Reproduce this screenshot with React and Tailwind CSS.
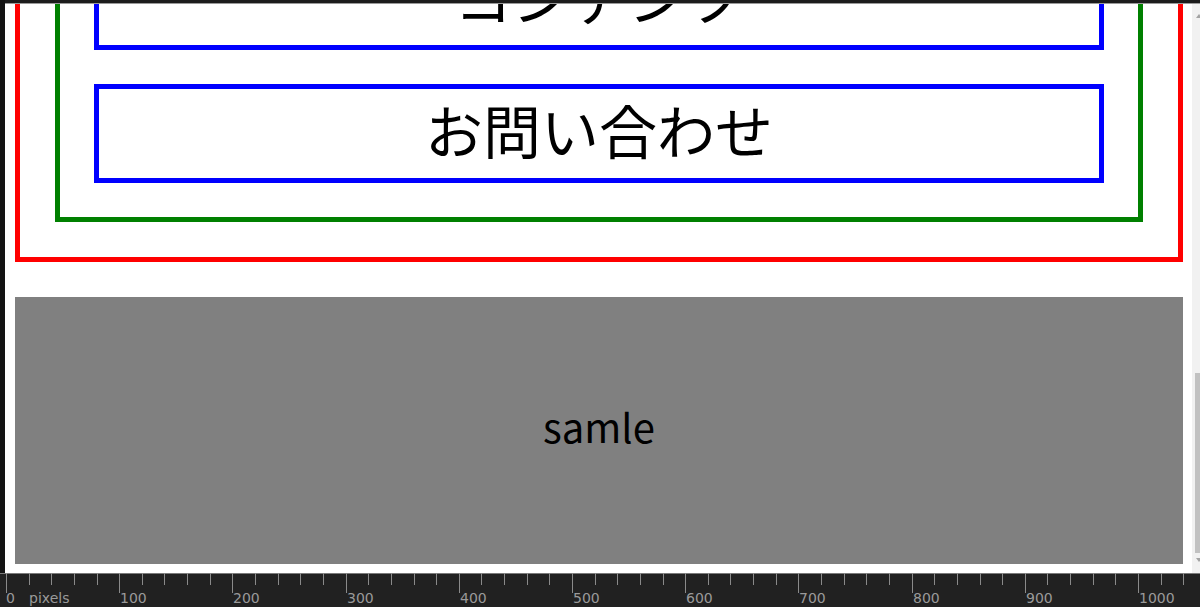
import React from 'react'

const NAV_ITEMS = ['コンテンツ', 'お問い合わせ']

// ruler: 100 units = 113.2px, origin at x=6
const unitX = (u) => 6 + u * 1.132

const Ruler = () => {
  const ticks = []
  for (let u = 0; u <= 1060; u += 20) ticks.push(u)
  const labels = []
  for (let u = 100; u <= 1000; u += 100) labels.push(u)

  return (
    <svg width="1200" height="34" className="block">
      <rect width="1200" height="34" fill="#212121" />
      <line x1="0" y1="0.5" x2="1200" y2="0.5" stroke="#7a7a7a" />
      {ticks.map((u) => {
        const x = Math.round(unitX(u)) + 0.5
        const major = u % 100 === 0
        return (
          <line key={u} x1={x} y1="0" x2={x} y2={major ? 20 : 12} stroke="#8a8a8a" strokeWidth="1" />
        )
      })}
      <text x="6" y="30" fill="#9a9a9a" fontSize="14" fontFamily="'DejaVu Sans', sans-serif">0</text>
      <text x="29" y="30" fill="#9a9a9a" fontSize="14" fontFamily="'DejaVu Sans', sans-serif">pixels</text>
      {labels.map((u) => (
        <text key={u} x={Math.round(unitX(u)) + 1} y="30" fill="#9a9a9a" fontSize="14" fontFamily="'DejaVu Sans', sans-serif">
          {u}
        </text>
      ))}
    </svg>
  )
}

const Scrollbar = () => (
  <div className="relative w-[8px] h-full bg-[#f1f1f1]">
    <svg width="8" height="6" className="absolute left-[3px] top-[9px]">
      <path d="M4 1 L7 5 L1 5 Z" fill="#a3a3a3" />
    </svg>
    <div className="absolute left-[3px] right-0 top-[369px] h-[180px] bg-[#c1c1c1]" />
    <svg width="8" height="6" className="absolute left-[3px] top-[553px]">
      <path d="M1 1 L7 1 L4 5 Z" fill="#a3a3a3" />
    </svg>
  </div>
)

// page is scrolled down, so the top of the nav sits above the viewport
const Page = () => (
  <div className="mt-[-142px] pt-[10px] pl-[10px] pr-[9px] pb-[10px] font-['Noto_Sans_CJK_JP',sans-serif] text-black">
    <div className="border-[5px] border-[#ff0000] p-[35px]">
      <nav className="border-[5px] border-[#008000] p-[34px] flex flex-col gap-[34px]">
        {NAV_ITEMS.map((item) => (
          <div
            key={item}
            className="h-[99px] pb-[10px] border-[5px] border-[#0000ff] flex items-center justify-center text-[58px] leading-none"
          >
            {item}
          </div>
        ))}
      </nav>
    </div>

    <div className="mt-[35px] h-[267px] pb-[10px] bg-[#808080] flex items-center justify-center text-[40px] leading-none">
      samle
    </div>
  </div>
)

export default function App() {
  return (
    <div className="w-[1200px] h-[607px] flex flex-col overflow-hidden bg-[#1c1c1c]">
      <div className="flex flex-1 min-h-0">
        <div className="w-[5px] bg-[#131313]" />
        <div className="flex-1 flex flex-col min-w-0">
          <div className="h-[4px] bg-[#1c1c1c] border-b border-[#9a9a9a]" />
          <div className="flex flex-1 min-h-0">
            <div className="flex-1 overflow-hidden bg-white">
              <Page />
            </div>
            <Scrollbar />
          </div>
        </div>
      </div>
      <Ruler />
    </div>
  )
}
